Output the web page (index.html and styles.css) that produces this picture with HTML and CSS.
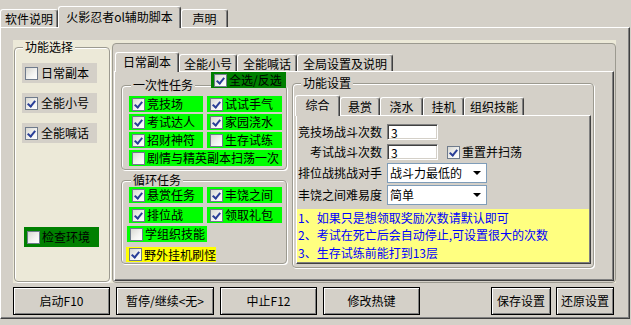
FILE: index.html
```html
<!DOCTYPE html>
<html>
<head>
<meta charset="utf-8">
<title>火影忍者ol辅助脚本</title>
<link rel="stylesheet" href="styles.css">
</head>
<body>
<div class="tabs-top">
  <div class="ttab t1">软件说明</div>
  <div class="ttab t2 active">火影忍者ol辅助脚本</div>
  <div class="ttab t3">声明</div>
</div>
<div class="panel">
  <div class="page">
    <div class="group g-left">
      <div class="legend lg-left">功能选择</div>
      <label class="chk gray lrow first"><span class="cb"></span>日常副本</label>
      <label class="chk gray lrow"><span class="cb on"></span>全能小号</label>
      <label class="chk gray lrow"><span class="cb on"></span>全能喊话</label>
      <label class="chk dgreen env"><span class="cb"></span>检查环境</label>
    </div>
    <div class="frame">
      <div class="strip strip-main">
        <div class="tab active w64">日常副本</div>
        <div class="tab w58">全能小号</div>
        <div class="tab w60">全能喊话</div>
        <div class="tab w96">全局设置及说明</div>
      </div>
      <div class="tbody body-main">
        <div class="col-left">
          <div class="group g-once">
            <div class="legend lg-in">一次性任务</div>
            <label class="chk dgreen selall"><span class="cb on"></span>全选/反选</label>
            <div class="grid">
              <label class="chk green"><span class="cb on"></span>竞技场</label>
              <label class="chk green"><span class="cb on"></span>试试手气</label>
              <label class="chk green"><span class="cb on"></span>考试达人</label>
              <label class="chk green"><span class="cb on"></span>家园浇水</label>
              <label class="chk green"><span class="cb on"></span>招财神符</label>
              <label class="chk green"><span class="cb"></span>生存试练</label>
              <label class="chk green span2"><span class="cb"></span>剧情与精英副本扫荡一次</label>
            </div>
          </div>
          <div class="group g-loop">
            <div class="legend lg-in">循环任务</div>
            <div class="lrow2 r1">
              <label class="chk green c1"><span class="cb on"></span>悬赏任务</label>
              <label class="chk green c2"><span class="cb on"></span>丰饶之间</label>
            </div>
            <div class="lrow2 r2">
              <label class="chk green c1"><span class="cb on"></span>排位战</label>
              <label class="chk green c2"><span class="cb on"></span>领取礼包</label>
            </div>
            <label class="chk green learn"><span class="cb"></span>学组织技能</label>
            <label class="chk yellow wild"><span class="cb on"></span>野外挂机刷怪</label>
          </div>
        </div>
        <div class="group g-func">
          <div class="legend lg-func">功能设置</div>
          <div class="strip strip-inner">
            <div class="tab itab active w45">综合</div>
            <div class="tab itab w40">悬赏</div>
            <div class="tab itab w43">浇水</div>
            <div class="tab itab w41">挂机</div>
            <div class="tab itab w60">组织技能</div>
          </div>
          <div class="tbody body-inner">
            <div class="frow fr1">
              <span class="flabel">竞技场战斗次数</span>
              <span class="input">3</span>
            </div>
            <div class="frow fr2">
              <span class="flabel">考试战斗次数</span>
              <span class="input">3</span>
              <label class="chk reset"><span class="cb on"></span>重置并扫荡</label>
            </div>
            <div class="frow sel fr3">
              <span class="flabel">排位战挑战对手</span>
              <span class="select"><span>战斗力最低的</span><i class="arrow"></i></span>
            </div>
            <div class="frow sel fr4">
              <span class="flabel">丰饶之间难易度</span>
              <span class="select"><span>简单</span><i class="arrow"></i></span>
            </div>
            <div class="note">
              <div>1、如果只是想领取奖励次数请默认即可</div>
              <div>2、考试在死亡后会自动停止,可设置很大的次数</div>
              <div>3、生存试练前能打到13层</div>
            </div>
          </div>
        </div>
      </div>
    </div>
  </div>
  <div class="btns">
    <div class="btn b1">启动F10</div>
    <div class="btn b2">暂停/继续&lt;无&gt;</div>
    <div class="btn b3">中止F12</div>
    <div class="btn b4">修改热键</div>
    <div class="btn b5">保存设置</div>
    <div class="btn b6">还原设置</div>
  </div>
</div>
</body>
</html>
```

FILE: styles.css
```css
* { box-sizing: border-box; }
html, body { margin: 0; padding: 0; }
body {
  width: 631px;
  height: 325px;
  overflow: hidden;
  background: #d4d0c8;
  font-family: "Noto Sans CJK SC", "Noto Sans", sans-serif;
  font-size: 12px;
  line-height: 12px;
  color: #000;
}

/* top tabs */
.tabs-top {
  display: flex;
  align-items: flex-end;
  height: 27px;
  position: relative;
  z-index: 2;
}
.ttab, .tab {
  display: flex;
  align-items: center;
  justify-content: center;
  background: #d4d0c8;
  border: 1px solid #fff;
  border-bottom: none;
  border-right-color: #404040;
  box-shadow: inset -1px 0 0 #808080;
  border-radius: 3px 3px 0 0;
  white-space: nowrap;
}
.ttab { height: 18px; padding-top: 1px; }
.ttab.active { height: 22px; margin-bottom: -1px; padding-bottom: 3px; }
.t1 { width: 58px; }
.t2 { width: 123px; }
.t3 { width: 47px; }

/* main panel */
.panel {
  width: 630px;
  height: 292px;
  border: 1px solid #fff;
  border-right-color: #404040;
  border-bottom-color: #404040;
  box-shadow: inset -1px -1px 0 #808080;
  padding: 12px 0 0 12px;
}
.page {
  width: 603px;
  height: 243px;
  background: #ece9d8;
  display: flex;
  align-items: flex-start;
}

/* group boxes */
.group {
  position: relative;
  border: 1px solid #9c9a90;
  border-radius: 4px;
  box-shadow: inset 1px 1px 0 #fff, 1px 1px 0 #fff;
  background: #d4d0c8;
}
.legend {
  width: fit-content;
  height: 12px;
  margin-top: -7px;
  padding: 0 2px;
  background: #d4d0c8;
  white-space: nowrap;
}
.g-left {
  width: 96px;
  height: 235px;
  margin: 7px 0 0 1px;
  padding-left: 7px;
  background: #ece9d8;
}
.lg-left { margin-left: 1px; background: #ece9d8; }

/* checkbox items */
.chk {
  display: flex;
  align-items: center;
  height: 16px;
  white-space: nowrap;
}
.cb {
  position: relative;
  flex: none;
  width: 13px;
  height: 13px;
  margin: 0 2px 0 3px;
  border: 1px solid #6f7b8c;
  background: linear-gradient(135deg, #d8d8d2 0%, #f4f4f2 60%, #ffffff 100%);
}
.cb.on::after {
  content: "";
  position: absolute;
  left: 3px;
  top: 1px;
  width: 3px;
  height: 6px;
  border: solid #2a3f98;
  border-width: 0 2px 2px 0;
  transform: rotate(40deg);
}
.gray { background: #d4d0c8; }
.green { background: #00ff00; }
.dgreen { background: #008000; }
.yellow { background: #ffff00; }

.lrow { width: 75px; height: 20px; margin-top: 10px; }
.lrow .cb { margin-right: 3px; }
.env { width: 75px; height: 20px; margin: 84px 0 0 2px; }

/* framed area with inner tabs */
.frame {
  width: 504px;
  height: 240px;
  margin: 3px 0 0 2px;
  border: 1px solid #9c9a90;
  border-radius: 4px;
  background: #d4d0c8;
  padding: 8px 0 0 1px;
}
.strip {
  display: flex;
  align-items: flex-end;
  position: relative;
  z-index: 1;
}
.strip-main { height: 19px; padding-left: 1px; }
.tab { height: 17px; padding-top: 1px; }
.tab.active { height: 20px; margin-bottom: -1px; padding-bottom: 2px; }
.w64 { width: 64px; }
.w58 { width: 58px; }
.w60 { width: 60px; }
.w96 { width: 96px; }
.w45 { width: 45px; }
.w40 { width: 40px; }
.w43 { width: 43px; }
.w41 { width: 41px; }

.tbody {
  border: 1px solid #fff;
  border-right-color: #404040;
  border-bottom-color: #404040;
  box-shadow: inset -1px -1px 0 #808080;
}
.body-main {
  width: 500px;
  height: 210px;
  display: flex;
  align-items: flex-start;
  padding-left: 6px;
}
.col-left { width: 166px; }

.g-once { width: 166px; height: 85px; margin-top: 13px; }
.lg-in { margin-left: 9px; }
.selall {
  position: absolute;
  left: 89px;
  top: -14px;
  width: 75px;
  height: 16px;
}
.grid {
  display: grid;
  grid-template-columns: 74px 75px;
  grid-auto-rows: 16px;
  column-gap: 4px;
  row-gap: 2px;
  margin-top: 5px;
  padding-left: 7px;
}
.span2 { grid-column: span 2; }

.g-loop { width: 166px; height: 84px; margin-top: 10px; }
.lrow2 { display: flex; gap: 4px; padding-left: 7px; }
.lrow2.r1 { margin-top: 1px; }
.lrow2.r2 { margin-top: 4px; }
.c1 { width: 74px; }
.c2 { width: 75px; }
.learn { width: 80px; margin: 3px 0 0 5px; }
.wild { width: 90px; height: 15px; margin: 5px 0 0 4px; }

/* 功能设置 */
.g-func { width: 302px; height: 185px; margin: 11px 0 0 5px; }
.lg-func { margin-left: 8px; }
.strip-inner { height: 20px; margin-top: 6px; padding-left: 2px; }
.itab { height: 18px; }
.itab.active { height: 21px; padding-bottom: 3px; }
.body-inner {
  width: 295px;
  height: 149px;
  margin-left: 3px;
  padding: 8px 0 0 1px;
}
.frow { display: flex; align-items: center; height: 16px; }
.frow.sel { height: 20px; }
.fr2 { margin-top: 4px; }
.fr3 { margin-top: 3px; }
.fr4 { margin-top: 2px; }
.flabel { width: 84px; text-align: right; white-space: nowrap; }
.input {
  width: 51px;
  height: 16px;
  margin-left: 5px;
  background: #fff;
  border: 1px solid #808080;
  border-right-color: #fff;
  border-bottom-color: #fff;
  box-shadow: inset 1px 1px 0 #404040, inset -1px -1px 0 #d4d0c8;
  padding: 2px 0 0 3px;
  line-height: 12px;
}
.reset { margin-left: 6px; }
.select {
  display: flex;
  align-items: center;
  justify-content: space-between;
  width: 100px;
  height: 20px;
  margin-left: 5px;
  background: #fff;
  border: 1px solid #7f9db9;
  padding: 0 5px 0 2px;
}
.arrow {
  width: 0;
  height: 0;
  border-left: 4px solid transparent;
  border-right: 4px solid transparent;
  border-top: 4px solid #000;
}
.note {
  width: 292px;
  height: 53px;
  margin: 4px 0 0 -1px;
  background: #ffff80;
  color: #0000ff;
  padding: 0 0 0 1px;
  font-size: 12px;
  line-height: 17.4px;
  white-space: nowrap;
}
.note div { height: 17.4px; }

/* bottom buttons */
.btns { display: flex; margin-top: 4px; }
.btn {
  height: 28px;
  display: flex;
  align-items: center;
  justify-content: center;
  background: #d4d0c8;
  border: 1px solid #000;
  box-shadow: inset 1px 1px 0 #fff, inset -1px -1px 0 #808080;
  white-space: nowrap;
}
.b1 { width: 97px; }
.b2 { width: 98px; margin-left: 6px; }
.b3 { width: 97px; margin-left: 6px; }
.b4 { width: 97px; margin-left: 6px; }
.b5 { width: 60px; margin-left: 71px; }
.b6 { width: 58px; margin-left: 5px; }
```
